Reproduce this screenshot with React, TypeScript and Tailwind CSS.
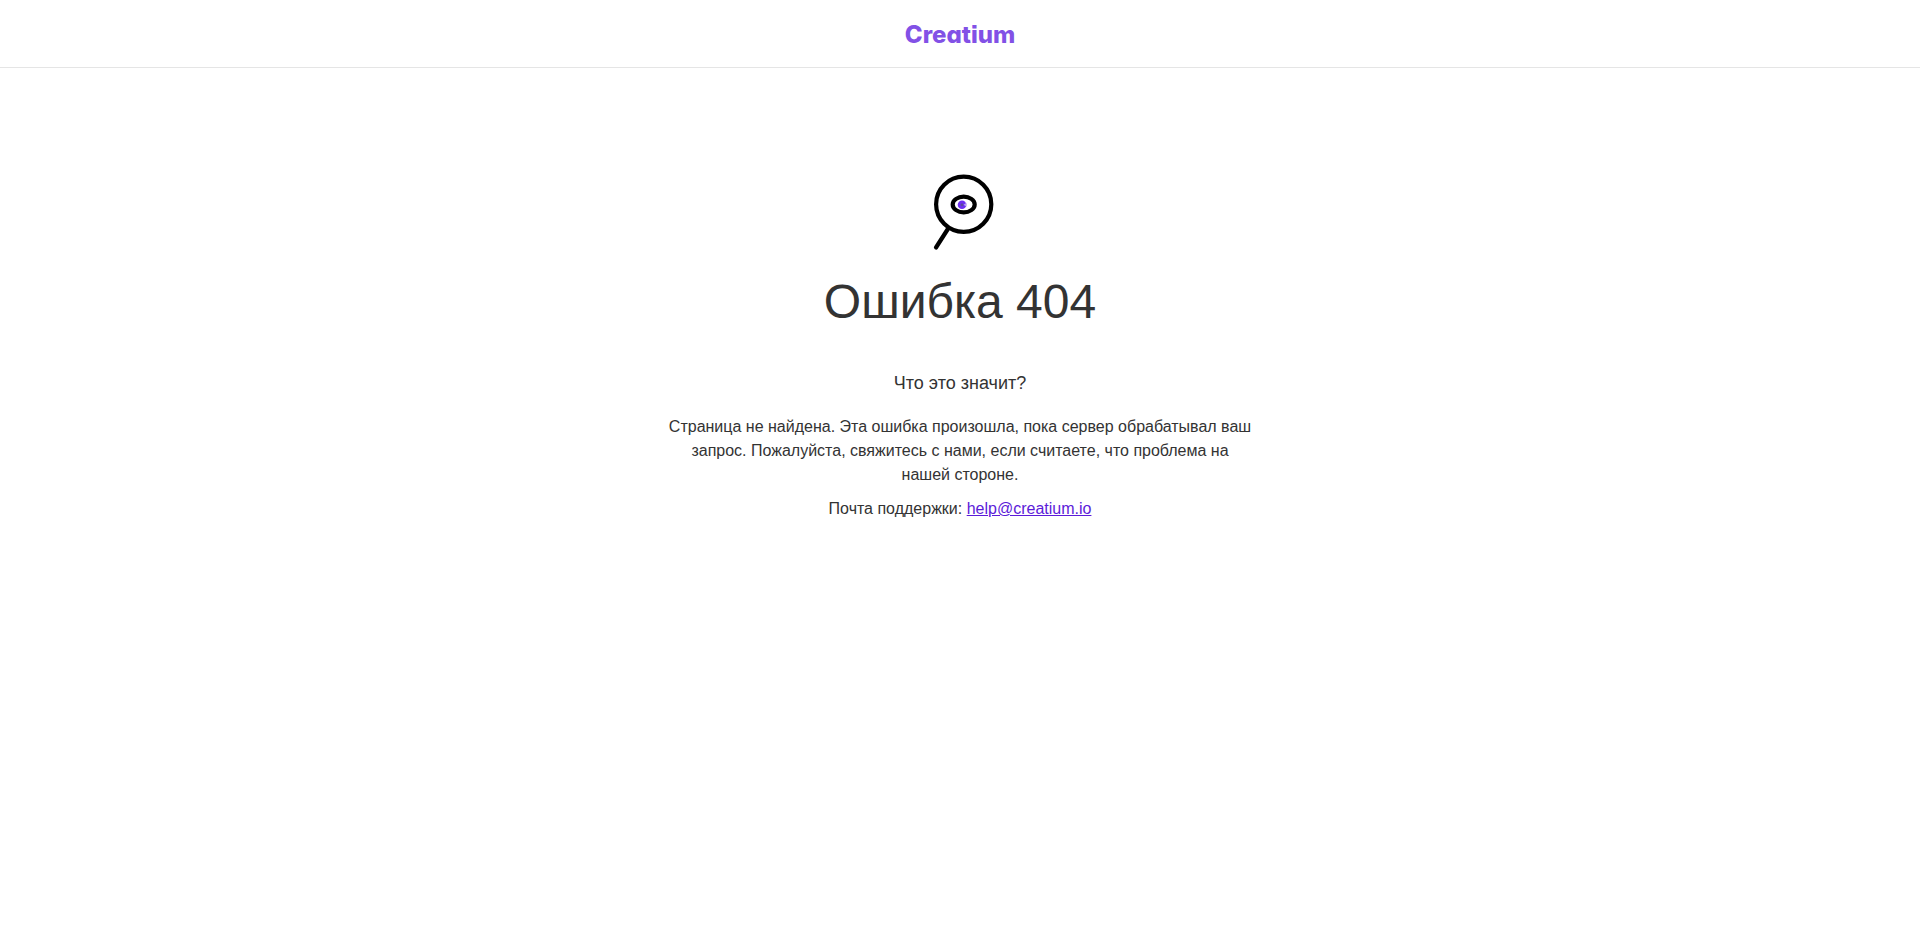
function Logo() {
  return (
    <a
      href="/"
      className="font-['Inter',sans-serif] text-2xl font-extrabold text-[#8251e6] [font-feature-settings:'cv11','ss07']"
    >
      Creatium
    </a>
  );
}

function SearchEye() {
  return (
    <svg viewBox="0 0 80 80" className="mx-auto h-20 w-20" fill="none" aria-hidden="true">
      <circle cx="43.7" cy="32.2" r="27.6" stroke="#000" strokeWidth="4.2" />
      <path d="M28.5 56 16 75.5" stroke="#000" strokeWidth="4.2" strokeLinecap="round" />
      <path
        d="M32.7 32.5C32.7 28 38 24.6 43.7 24.6S54.7 28 54.7 32.5 49.4 40.4 43.7 40.4 32.7 37 32.7 32.5Z"
        stroke="#000"
        strokeWidth="4.2"
      />
      <circle cx="42" cy="32.7" r="4.3" fill="#6d2ff2" />
      <circle cx="42" cy="32.7" r="1.5" fill="#5b4a9e" />
      <path d="m43.5 32.7 3-2v4Z" fill="#b9a2f5" />
    </svg>
  );
}

export default function App() {
  return (
    <div className="min-h-screen bg-white font-['Liberation_Sans',Arial,sans-serif] text-base text-[#333]">
      <header className="flex h-17 items-center justify-center border-b border-[#e5e5e5] pt-0.5">
        <Logo />
      </header>
      <main className="mx-auto max-w-[600px] px-2 pt-26 text-center">
        <SearchEye />
        <h1 className="mt-4.5 text-5xl leading-16">Ошибка 404</h1>
        <h2 className="mt-[35px] text-lg">Что это значит?</h2>
        <p className="mt-4.5">
          Страница не найдена. Эта ошибка произошла, пока сервер обрабатывал ваш запрос. Пожалуйста,
          свяжитесь с нами, если считаете, что проблема на нашей стороне.
        </p>
        <p className="mt-2.5">
          Почта поддержки:{" "}
          <a href="mailto:help@creatium.io" className="text-[#5c1bd9] underline">
            help@creatium.io
          </a>
        </p>
      </main>
    </div>
  );
}
